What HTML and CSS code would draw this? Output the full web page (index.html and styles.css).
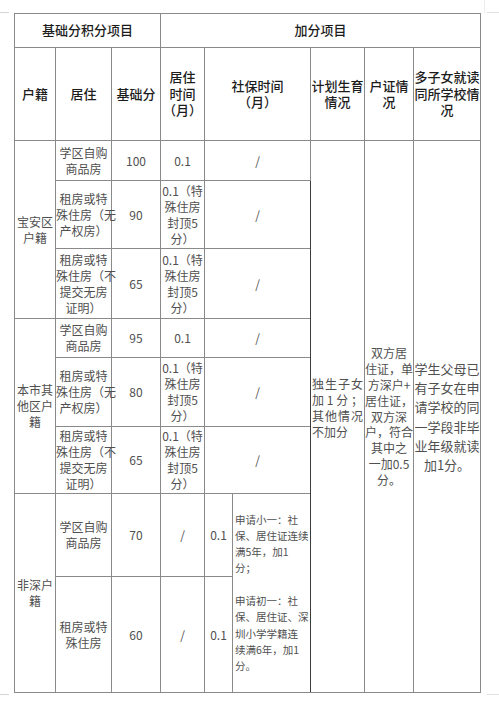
FILE: index.html
```html
<!DOCTYPE html>
<html lang="zh-CN">
<head>
<meta charset="utf-8">
<title>积分项目表</title>
<link rel="stylesheet" href="styles.css">
</head>
<body>
<div class="page">
<table class="grid">
  <colgroup>
    <col class="c-hj"><col class="c-jz"><col class="c-jc"><col class="c-sj"><col class="c-sb1"><col class="c-sb2"><col class="c-jh"><col class="c-hz"><col class="c-dz">
  </colgroup>
  <tr class="r-h1">
    <th colspan="3">基础分积分项目</th>
    <th colspan="6">加分项目</th>
  </tr>
  <tr class="r-h2">
    <th>户籍</th>
    <th>居住</th>
    <th>基础分</th>
    <th>居住<br>时间<br>（月）</th>
    <th colspan="2">社保时间<br>（月）</th>
    <th>计划生育<br>情况</th>
    <th>户证情<br>况</th>
    <th>多子女就读<br>同所学校情<br>况</th>
  </tr>
  <tr class="r-a1">
    <td rowspan="3">宝安区<br>户籍</td>
    <td>学区自购<br>商品房</td>
    <td>100</td>
    <td>0.1</td>
    <td colspan="2">/</td>
    <td rowspan="8" class="plan"><span class="jl">独生子女</span><span class="jl">加1分；</span><span class="jl">其他情况</span><span class="ll">不加分</span></td>
    <td rowspan="8" class="huzheng">双方居<br>住证，单<br>方深户+<br>居住证，<br>双方深<br>户，符合<br>其中之<br>一加0.5<br>分。</td>
    <td rowspan="8" class="multi">学生父母已<br>有子女在申<br>请学校的同<br>一学段非毕<br>业年级就读<br>加1分。</td>
  </tr>
  <tr class="r-a2">
    <td>租房或特<br>殊住房（无<br>产权房）</td>
    <td>90</td>
    <td>0.1（特<br>殊住房<br>封顶5<br>分）</td>
    <td colspan="2">/</td>
  </tr>
  <tr class="r-a3">
    <td>租房或特<br>殊住房（不<br>提交无房<br>证明）</td>
    <td>65</td>
    <td>0.1（特<br>殊住房<br>封顶5<br>分）</td>
    <td colspan="2">/</td>
  </tr>
  <tr class="r-b1">
    <td rowspan="3">本市其<br>他区户<br>籍</td>
    <td>学区自购<br>商品房</td>
    <td>95</td>
    <td>0.1</td>
    <td colspan="2">/</td>
  </tr>
  <tr class="r-b2">
    <td>租房或特<br>殊住房（无<br>产权房）</td>
    <td>80</td>
    <td>0.1（特<br>殊住房<br>封顶5<br>分）</td>
    <td colspan="2">/</td>
  </tr>
  <tr class="r-b3">
    <td>租房或特<br>殊住房（不<br>提交无房<br>证明）</td>
    <td>65</td>
    <td>0.1（特<br>殊住房<br>封顶5<br>分）</td>
    <td colspan="2">/</td>
  </tr>
  <tr class="r-c1">
    <td rowspan="2">非深户<br>籍</td>
    <td>学区自购<br>商品房</td>
    <td>70</td>
    <td>/</td>
    <td>0.1</td>
    <td rowspan="2" class="apply">申请小一：社<br>保、居住证连续<br>满5年，加1<br>分；<br><br>申请初一：社<br>保、居住证、深<br>圳小学学籍连<br>续满6年，加1<br>分。</td>
  </tr>
  <tr class="r-c2">
    <td>租房或特<br>殊住房</td>
    <td>60</td>
    <td>/</td>
    <td>0.1</td>
  </tr>
</table>
</div>
</body>
</html>
```

FILE: styles.css
```css
html, body {
  margin: 0;
  padding: 0;
  background: #ffffff;
}

body {
  font-family: "Noto Sans CJK SC", "Noto Sans", sans-serif;
  color: #4a4a4a;
}

.page {
  position: relative;
  width: 499px;
  height: 702px;
  padding-top: 13px;
  box-sizing: border-box;
}

/* faint page corner marks of the original document */
.page::before {
  content: "";
  position: absolute;
  inset: 0;
  pointer-events: none;
  background:
    linear-gradient(#d4d4d4, #d4d4d4) 0 12px / 9px 1px no-repeat,
    linear-gradient(#e2e2e2, #e2e2e2) 487px 12px / 12px 1px no-repeat,
    linear-gradient(#ececec, #ececec) 484px 0 / 1px 13px no-repeat,
    linear-gradient(#d4d4d4, #d4d4d4) 0 694px / 9px 1px no-repeat,
    linear-gradient(#e2e2e2, #e2e2e2) 487px 694px / 12px 1px no-repeat;
}

.grid {
  margin: 0 0 0 14px;
  width: 467px;
  table-layout: fixed;
  border-collapse: collapse;
  border-top: 1px solid #8c8c8c;
  border-right: 1px solid #7a7a7a;
  border-left: 1px solid #3a3a3a;
  border-bottom: 1px solid #2e2e2e;
}

.c-hj { width: 41px; }
.c-jz { width: 56px; }
.c-jc { width: 49px; }
.c-sj { width: 44px; }
.c-sb1 { width: 28px; }
.c-sb2 { width: 78px; }
.c-jh { width: 54px; }
.c-hz { width: 49px; }
.c-dz { width: 67px; }

.grid th,
.grid td {
  border: 1px solid #8a8a8a;
  padding: 0;
  text-align: center;
  vertical-align: middle;
  white-space: nowrap;
  overflow: visible;
}

.grid th {
  font-size: 13px;
  line-height: 16.5px;
  font-weight: 500;
  color: #1c1c1c;
}

.grid td {
  font-size: 12px;
  line-height: 16px;
  font-weight: 400;
  color: #505050;
}

.r-h1 { height: 34px; }
.r-h2 { height: 93px; }
.r-a1 { height: 40px; }
.r-a2 { height: 68px; }
.r-a3 { height: 70px; }
.r-b1 { height: 39px; }
.r-b2 { height: 69px; }
.r-b3 { height: 67px; }
.r-c1 { height: 83px; }
.r-c2 { height: 116px; }

.grid td.plan {
  text-align: left;
  padding: 0 1px 18px 1px;
  border-left-color: #3c3c3c;
}

.plan .jl {
  display: block;
  text-align: justify;
  text-align-last: justify;
}

.plan .ll {
  display: block;
  text-align: left;
}

.grid td.huzheng {
  line-height: 15.8px;
}

.grid td.multi {
  font-size: 13px;
  line-height: 19.3px;
}

.grid td.apply {
  font-size: 10.5px;
  line-height: 16.3px;
  text-align: left;
  padding: 0 0 0 2px;
}
```
